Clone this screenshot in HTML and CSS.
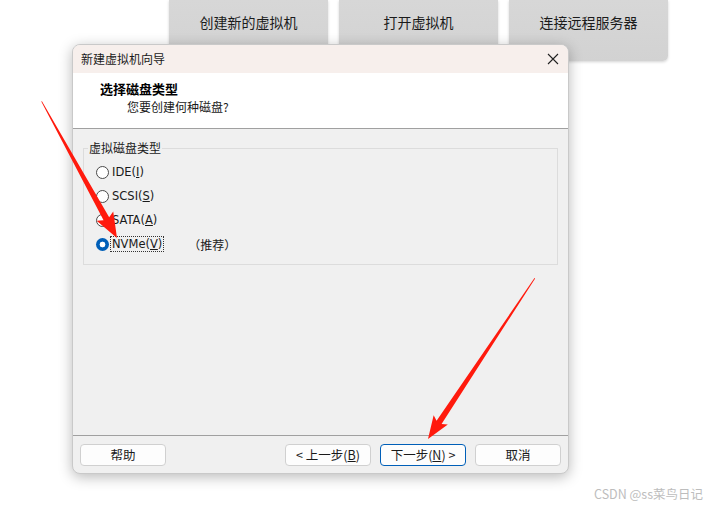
FILE: index.html
```html
<!DOCTYPE html>
<html lang="zh">
<head>
<meta charset="utf-8">
<title>新建虚拟机向导</title>
<link rel="stylesheet" href="styles.css">
</head>
<body>
<div class="screen">
  <div class="topbar">
    <div class="tile">创建新的虚拟机</div>
    <div class="tile">打开虚拟机</div>
    <div class="tile tall">连接远程服务器</div>
  </div>

  <div class="dialog">
    <div class="titlebar">
      <span class="title">新建虚拟机向导</span>
      <svg class="close" width="12" height="12" viewBox="0 0 12 12"><path d="M1 1 L11 11 M11 1 L1 11" stroke="#222" stroke-width="1.1" fill="none"/></svg>
    </div>
    <div class="header">
      <div class="h-title">选择磁盘类型</div>
      <div class="h-sub">您要创建何种磁盘?</div>
    </div>
    <div class="body">
      <fieldset class="group">
        <legend class="legend">虚拟磁盘类型</legend>
        <div class="opt"><span class="radio"></span><span class="lbl">IDE(<u>I</u>)</span></div>
        <div class="opt"><span class="radio"></span><span class="lbl">SCSI(<u>S</u>)</span></div>
        <div class="opt"><span class="radio"></span><span class="lbl">SATA(<u>A</u>)</span></div>
        <div class="opt"><span class="radio on"></span><span class="lbl focus">NVMe(<u>V</u>)</span><span class="rec">（推荐）</span></div>
      </fieldset>
    </div>
    <div class="footer">
      <button class="btn">帮助</button>
      <div class="spacer"></div>
      <button class="btn">&lt; 上一步(<u>B</u>)</button>
      <button class="btn default">下一步(<u>N</u>) &gt;</button>
      <button class="btn">取消</button>
    </div>
  </div>

  <svg class="arrows" width="718" height="508" viewBox="0 0 718 508">
    <g transform="translate(117 238) rotate(61.1)">
      <polygon points="-156,-0.4 -22,-3.2 -25,-9.5 0,0 -25,9.5 -22,3.2 -156,0.4" fill="#ff1a0d"/>
    </g>
    <g transform="translate(428 439) rotate(123.6)">
      <polygon points="-193,-0.4 -20,-3 -23,-8.5 0,0 -23,8.5 -20,3 -193,0.4" fill="#ff1a0d"/>
    </g>
  </svg>

  <div class="watermark">CSDN @ss菜鸟日记</div>
</div>
</body>
</html>
```

FILE: styles.css
```css
html, body {
  margin: 0;
  padding: 0;
  background: #ffffff;
}
body {
  font-family: "Noto Sans CJK SC", "DejaVu Sans", sans-serif;
  color: #1a1a1a;
}
.screen {
  position: relative;
  width: 718px;
  height: 508px;
  overflow: hidden;
}
.topbar {
  display: flex;
  gap: 11px;
  padding-left: 169px;
  align-items: flex-start;
}
.tile {
  width: 159px;
  height: 61px;
  box-sizing: border-box;
  padding-top: 12px;
  text-align: center;
  font-size: 14px;
  line-height: 20px;
  color: #1b1b1b;
  background: linear-gradient(#d7d7d7, #d2d2d2);
  border-radius: 0 0 5px 5px;
  box-shadow: 0 1px 3px rgba(0,0,0,0.18);
}
.dialog {
  position: absolute;
  left: 72px;
  top: 44px;
  width: 497px;
  height: 430px;
  box-sizing: border-box;
  border: 1px solid #c9c9c9;
  border-radius: 8px;
  overflow: hidden;
  background: #f0f0f0;
  display: flex;
  flex-direction: column;
  box-shadow: 0 3px 14px rgba(0,0,0,0.28);
}
.titlebar {
  height: 28px;
  flex: none;
  background: #f7efec;
  display: flex;
  align-items: center;
  justify-content: space-between;
  padding: 0 9px 0 8px;
}
.title {
  font-size: 12px;
  line-height: 16px;
}
.close {
  display: block;
}
.header {
  height: 56px;
  flex: none;
  background: #ffffff;
  border-bottom: 1px solid #a0a0a0;
  box-sizing: border-box;
  padding: 7px 0 0 27px;
}
.h-title {
  font-size: 13px;
  font-weight: bold;
  line-height: 18px;
  color: #000;
}
.h-sub {
  font-size: 12px;
  line-height: 18px;
  padding-left: 27px;
}
.body {
  flex: 1;
  padding: 12px 10px 0 10px;
  border-bottom: 1px solid #a0a0a0;
}
.group {
  margin: 0;
  height: 124px;
  box-sizing: border-box;
  border: 1px solid #dcdcdc;
  padding: 5px 0 0 12px;
}
.legend {
  font-size: 12px;
  line-height: 14px;
  padding: 0 1px;
  margin-left: -8px;
}
.opt {
  display: flex;
  align-items: center;
  height: 24px;
}
.radio {
  width: 11px;
  height: 11px;
  border: 1px solid #4a4a4a;
  border-radius: 50%;
  background: #fff;
  flex: none;
  margin-right: 1px;
  box-sizing: content-box;
}
.radio.on {
  width: 13px;
  height: 13px;
  border: none;
  background: radial-gradient(circle, #ffffff 0 2.6px, #005fb8 3.2px);
}
.lbl {
  font-family: "DejaVu Sans", sans-serif;
  font-size: 11.5px;
  line-height: 14px;
  padding: 0 1px;
  border: 1px dotted transparent;
}
.lbl.focus {
  border-color: #333;
}
.rec {
  font-size: 12px;
  margin-left: 24px;
}
.footer {
  height: 37px;
  flex: none;
  display: flex;
  align-items: center;
  gap: 9px;
  padding: 0 7px 0 7px;
}
.spacer {
  flex: 1;
}
.btn {
  width: 86px;
  height: 22px;
  box-sizing: border-box;
  border: 1px solid #d0d0d0;
  border-radius: 4px;
  background: #fdfdfd;
  font-family: "Noto Sans CJK SC", "DejaVu Sans", sans-serif;
  font-size: 12.5px;
  line-height: 18px;
  color: #1a1a1a;
  padding: 0;
}
.btn.default {
  border-color: #005fb8;
}
.arrows {
  position: absolute;
  left: 0;
  top: 0;
  pointer-events: none;
}
.watermark {
  position: absolute;
  left: 594px;
  top: 486px;
  font-size: 12.5px;
  line-height: 16px;
  color: #bdbdbd;
}
```
